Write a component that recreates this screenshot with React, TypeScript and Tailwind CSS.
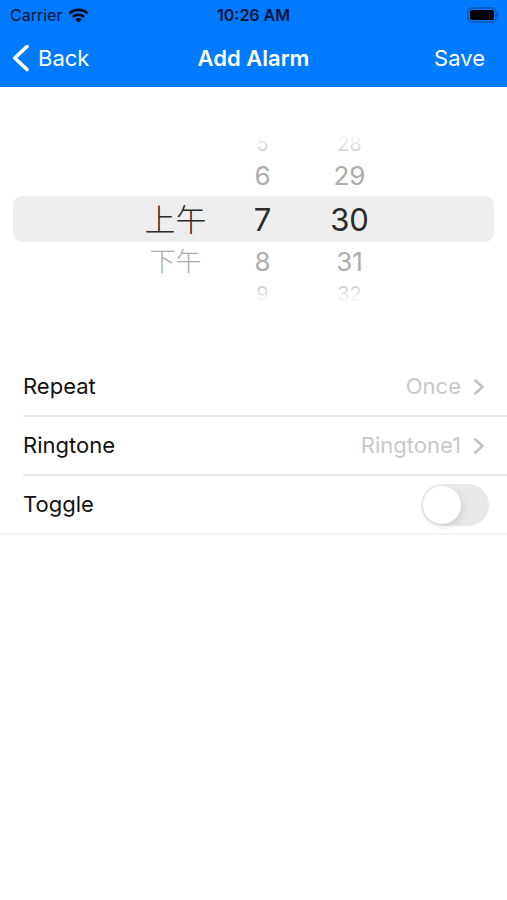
import { useState } from 'react'

const periods = [
    { label: "", value: "" },
    { label: "", value: "" },
    { label: "上午", value: "am" },
    { label: "下午", value: "pm" },
    { label: "", value: "" },
];
const hours = ["5", "6", "7", "8", "9"].map((h) => ({ label: h, value: h }));
const minutes = ["28", "29", "30", "31", "32"].map((m) => ({ label: m, value: m }));

// far, near, selected, near, far
const wheelStyles = [
    "h-6 text-[20px] bg-linear-to-b from-white from-10% to-[#c0c0c0] bg-clip-text text-transparent",
    "h-10 text-[26px] text-[#adadad]",
    "h-[46px] text-[31px] text-[#2c2c2c]",
    "h-10 text-[26px] text-[#adadad]",
    "h-6 text-[20px] bg-linear-to-t from-white from-10% to-[#c0c0c0] bg-clip-text text-transparent",
];

function Wheel({ name, items, className = "" }: { name: string; items: { label: string; value: string }[]; className?: string }) {
    return (
        <ul role="listbox" aria-label={name} className={`w-[87px] ${className}`}>
            {items.map((item, i) => (
                <li
                    key={i}
                    role="option"
                    aria-selected={i === 2}
                    className={`flex items-center justify-center leading-none ${wheelStyles[i]}`}
                >
                    {item.label}
                </li>
            ))}
        </ul>
    )
}

function StatusBar() {
    return (
        <div className="grid h-[30px] grid-cols-3 items-center px-2 text-[16px] text-[#001333]">
            <div className="flex items-center gap-1.5 pl-0.5">
                <span>Carrier</span>
                <svg width="21" height="15" viewBox="0 0 21 15" fill="none" stroke="#000a1c" strokeWidth="2.8">
                    <path d="M1.4 5.6a13 13 0 0 1 18.2 0" />
                    <path d="M4.9 9a8 8 0 0 1 11.2 0" />
                    <path d="M10.5 14.6 7.3 11.4a4.5 4.5 0 0 1 6.4 0z" fill="#000a1c" stroke="none" />
                </svg>
            </div>
            <span className="text-center font-semibold whitespace-nowrap">10:26 AM</span>
            <svg className="justify-self-end" width="32" height="16" viewBox="0 0 32 16">
                <rect x="1" y="1" width="28" height="14" rx="4" fill="none" stroke="#0555b0" strokeWidth="1.5" />
                <rect x="3" y="3" width="24" height="10" rx="2" fill="#000" />
                <path d="M30.5 5.5c1.4.6 1.4 4.4 0 5z" fill="#0555b0" />
            </svg>
        </div>
    )
}

function Chevron() {
    return (
        <svg width="12" height="18" viewBox="0 0 12 18" fill="none" stroke="#c2c2c4" strokeWidth="2.6">
            <path d="M1.5 1.8 9.5 9l-8 7.2" />
        </svg>
    )
}

function LinkRow({ label, value }: { label: string; value: string }) {
    return (
        <button type="button" className="ml-[23px] flex h-[59px] items-center border-b-2 border-[#e9e9eb] pr-[22px] text-left">
            <span className="flex-1">{label}</span>
            <span className="mr-3 text-[#c9c9cb]">{value}</span>
            <Chevron />
        </button>
    )
}

export default function AddAlarm() {
    const [enabled, setEnabled] = useState(false);

    return (
        <div className="min-h-screen bg-white font-['Inter','Noto_Sans_CJK_SC',sans-serif] text-[22px] text-[#111]">
            <header className="bg-[#007aff]">
                <StatusBar />
                <div className="grid h-[57px] grid-cols-3 items-center px-3 text-white">
                    <button type="button" className="flex items-center gap-2 justify-self-start">
                        <svg width="18" height="28" viewBox="0 0 18 28" fill="none" stroke="currentColor" strokeWidth="3.6">
                            <path d="M15 1.5 2.8 13 15 24.5" strokeLinecap="round" strokeLinejoin="round" />
                        </svg>
                        Back
                    </button>
                    <h1 className="text-center font-semibold whitespace-nowrap">Add Alarm</h1>
                    <button type="button" className="justify-self-end pr-2.5">Save</button>
                </div>
            </header>

            <section className="grid pt-[45px] pb-[52px]">
                <div className="col-start-1 row-start-1 mx-[13px] h-[46px] self-center rounded-[9px] bg-[#eeeeee]" />
                <div className="col-start-1 row-start-1 flex justify-center pl-[18px]">
                    <Wheel name="Period" items={periods} className="font-light" />
                    <Wheel name="Hour" items={hours} />
                    <Wheel name="Minute" items={minutes} />
                </div>
            </section>

            <main className="flex flex-col">
                <LinkRow label="Repeat" value="Once" />
                <LinkRow label="Ringtone" value="Ringtone1" />
                <div className="flex h-[59px] items-center justify-between border-b-2 border-[#f3f3f4] pr-[18px] pl-[23px]">
                    <label htmlFor="toggle">Toggle</label>
                    <input
                        id="toggle"
                        type="checkbox"
                        role="switch"
                        checked={enabled}
                        onChange={(e) => setEnabled(e.target.checked)}
                        className="flex h-[42px] w-[68px] appearance-none items-center rounded-full bg-[#e9e9ea] px-0.5 before:size-[38px] before:rounded-full before:bg-white before:shadow-[2px_3px_6px_rgba(0,0,0,0.1)] before:content-[''] checked:justify-end checked:bg-[#34c759]"
                    />
                </div>
            </main>
        </div>
    )
}
